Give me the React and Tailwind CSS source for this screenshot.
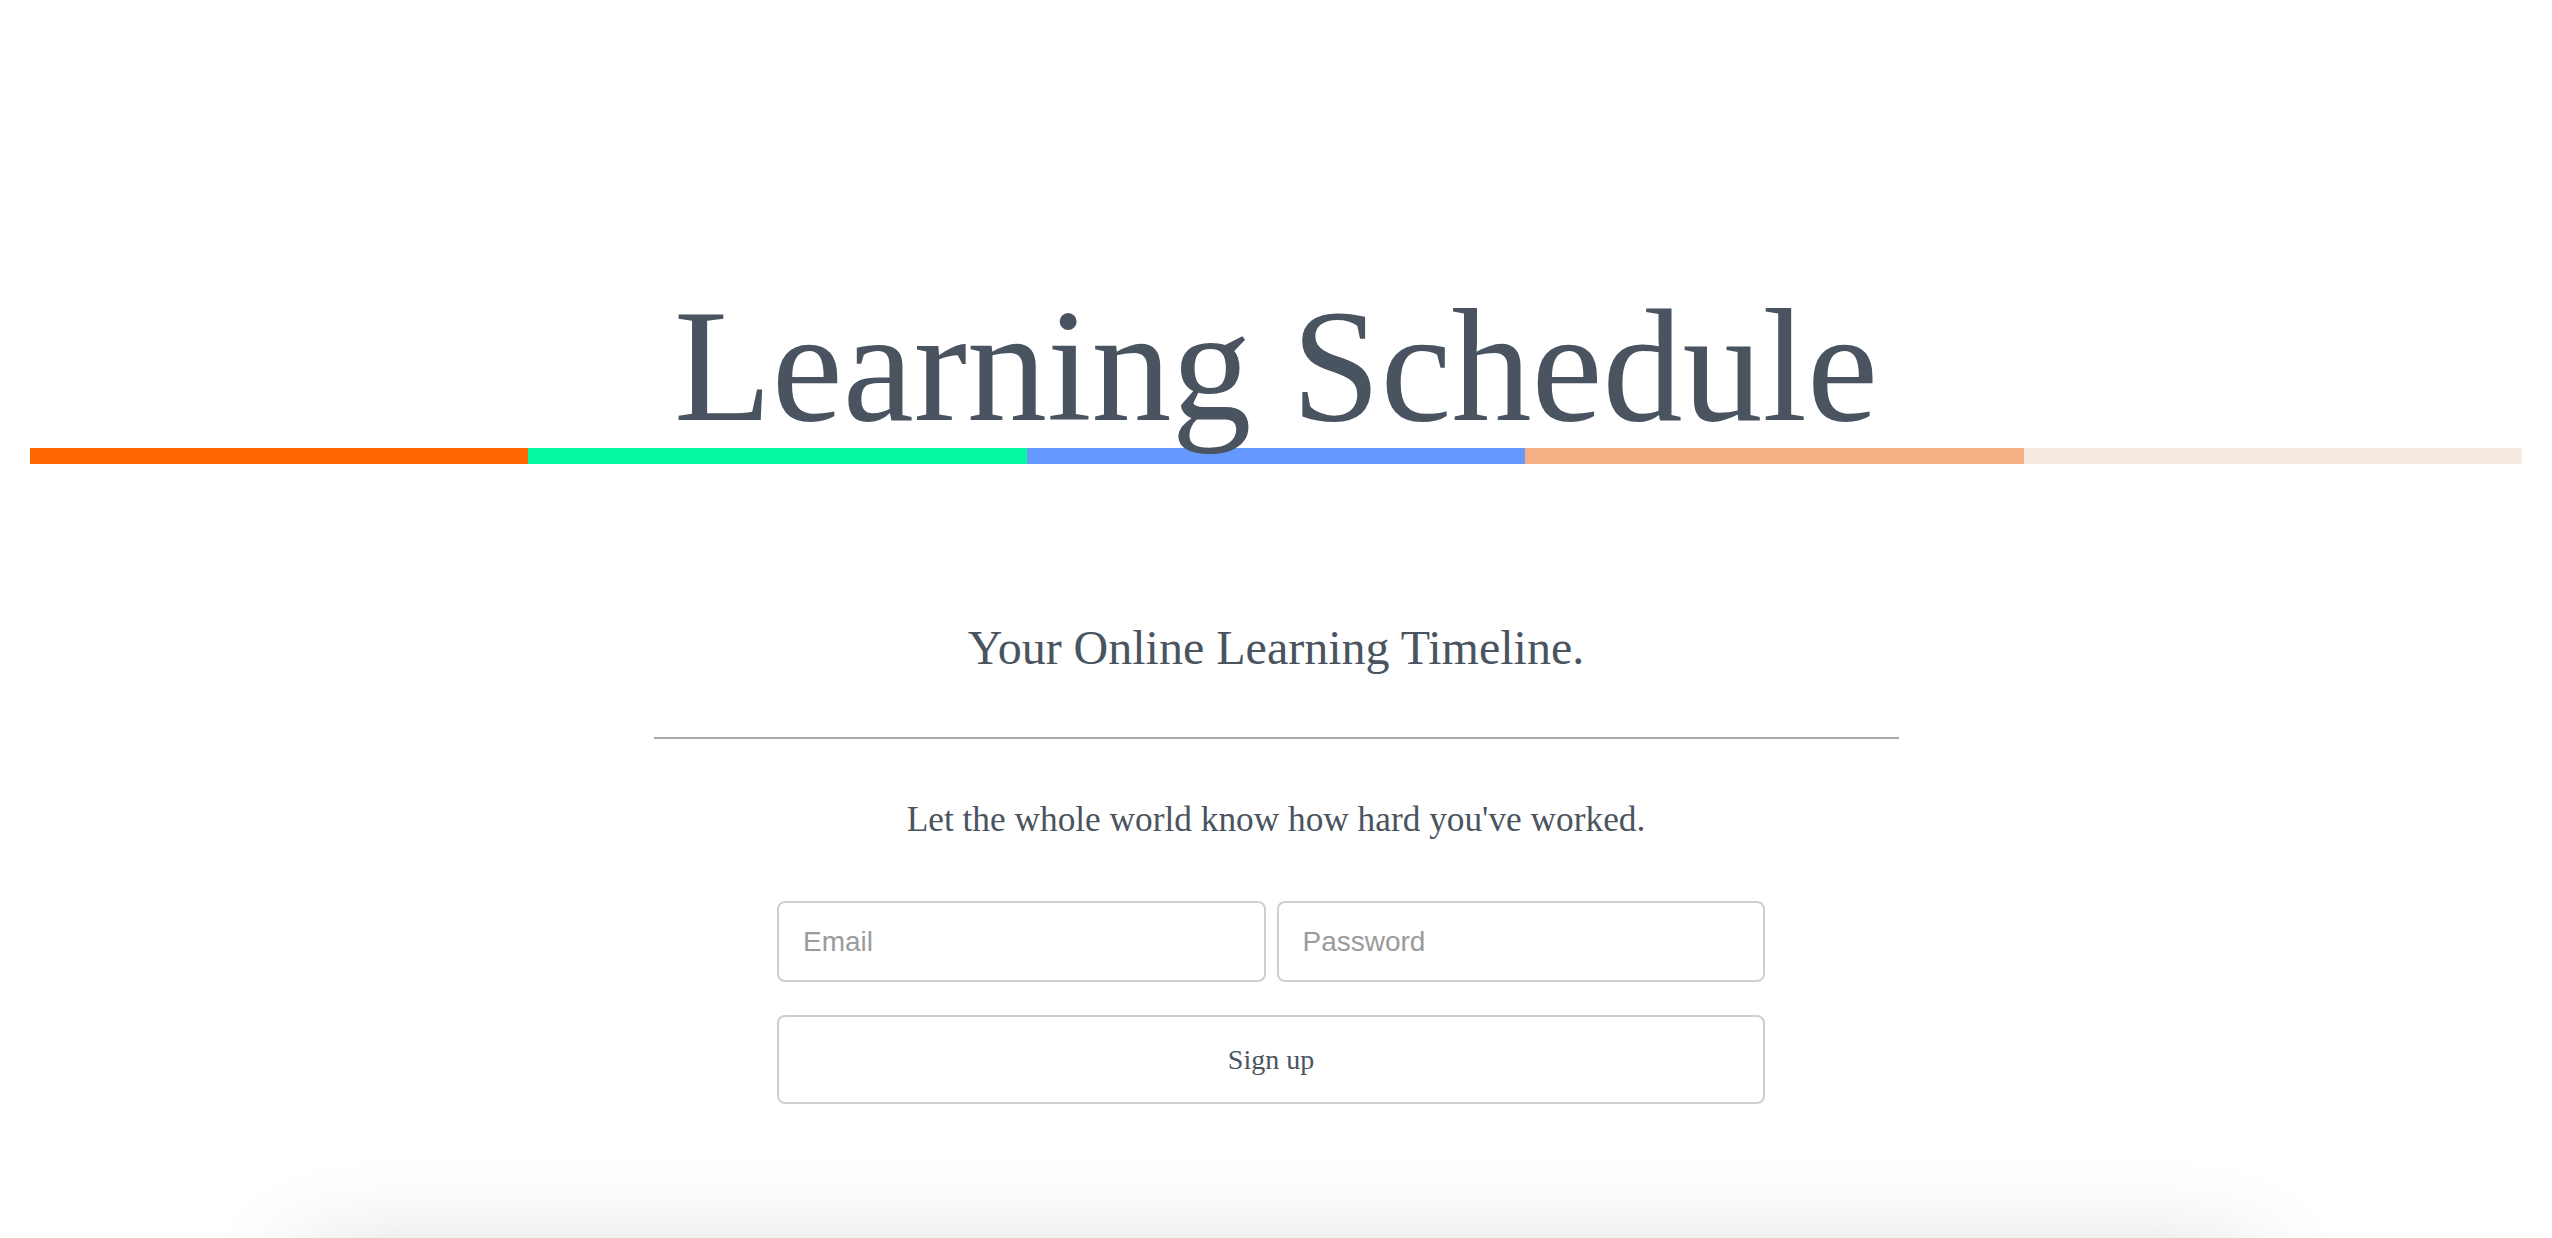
// Landing page: big serif title over a five-colour stripe, tagline and a sign-up form.
import React from "react";

// Segments of the stripe under the title, left to right.
const STRIPE = ["bg-[#ff6600]", "bg-[#07f9a2]", "bg-[#6699ff]", "bg-[#f6ae85]", "bg-[#f5ebe1]"];

export default function App() {
  return (
    <div className="h-screen overflow-hidden bg-white text-[#4a5460] font-['Liberation_Serif','Times_New_Roman',serif]">
      {/* ----- TITLE + STRIPE ----- */}
      <div className="pt-[286px]">
        <h1 className="relative z-10 text-center text-[160px] leading-none font-normal">
          Learning Schedule
        </h1>
        <div className="mx-[30px] mt-[2px] flex h-[16px]">
          {STRIPE.map((c) => (
            <div key={c} className={`flex-1 ${c}`} />
          ))}
        </div>
      </div>

      {/* ----- TAGLINE ----- */}
      <div className="mt-[160px] flex flex-col items-center">
        <p className="text-[48px] leading-none">Your Online Learning Timeline.</p>
        <hr className="mt-[65px] w-[1245px] border-0 h-[2px] bg-[#a9a9a9]" />
        <p className="mt-[63px] text-[35.3px] leading-none">
          Let the whole world know how hard you've worked.
        </p>

        {/* ----- FORM ----- */}
        <form className="mt-[64px] w-[988px] -translate-x-[5px]" onSubmit={(e) => e.preventDefault()}>
          <div className="grid grid-cols-2 gap-[11px]">
            <input
              type="email"
              placeholder="Email"
              className="h-[81px] rounded-[8px] border-2 border-[#cfcfcf] px-[24px] text-[28px] font-['Liberation_Sans',Arial,sans-serif] placeholder:text-[#9b9b9b] outline-none"
            />
            <input
              type="password"
              placeholder="Password"
              className="h-[81px] rounded-[8px] border-2 border-[#cfcfcf] px-[24px] text-[28px] font-['Liberation_Sans',Arial,sans-serif] placeholder:text-[#9b9b9b] outline-none"
            />
          </div>
          <button
            type="submit"
            className="mt-[33px] h-[89px] w-full rounded-[8px] border-2 border-[#cfcfcf] bg-white text-[28px] text-[#4a5460]"
          >
            Sign up
          </button>
        </form>

        {/* card peeking from below the fold */}
        <div className="mt-[150px] h-[400px] w-[1960px] bg-white shadow-[0_0_90px_rgba(0,0,0,0.16)]" />
      </div>
    </div>
  );
}
